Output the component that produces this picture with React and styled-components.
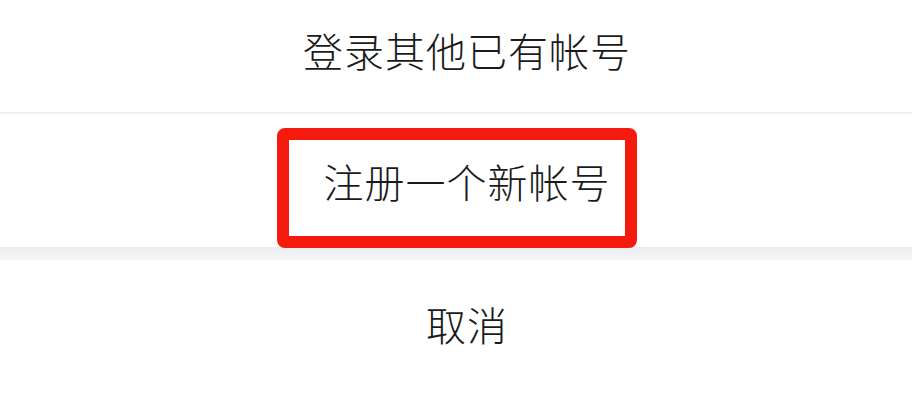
import React from "react";
import styled, { createGlobalStyle } from "styled-components";

const GlobalStyle = createGlobalStyle`
  html, body {
    margin: 0;
    padding: 0;
    background: #ffffff;
  }
  body {
    font-family: "Noto Sans CJK SC", "Noto Sans", sans-serif;
  }
`;

const Sheet = styled.div`
  width: 912px;
  height: 404px;
  overflow: hidden;
  display: flex;
  flex-direction: column;
  background: #ffffff;
`;

const Option = styled.div`
  position: relative;
  display: flex;
  align-items: center;
  justify-content: center;
  height: ${(p) => p.$height}px;
  padding-left: 22px;
  padding-bottom: ${(p) => p.$lift || 0}px;
  box-sizing: border-box;
  font-size: 40px;
  font-weight: 300;
  line-height: 1;
  letter-spacing: 1px;
  color: #1a1a1a;
`;

const Divider = styled.div`
  height: 2px;
  background: #f0f0f1;
`;

const Band = styled.div`
  height: 13px;
  background: linear-gradient(#ececee, #f6f6f7);
`;

// red annotation frame drawn over the middle option
const Highlight = styled.div`
  position: absolute;
  top: 14px;
  left: 50%;
  transform: translateX(calc(-50% + 1px));
  width: 360px;
  height: 120px;
  box-sizing: border-box;
  border: 12px solid #f41a0d;
  border-radius: 8px;
`;

const App = () => {
  return (
    <>
      <GlobalStyle />
      <Sheet>
        <Option $height={112} $lift={12}>登录其他已有帐号</Option>
        <Divider />
        <Option $height={133}>
          注册一个新帐号
          <Highlight />
        </Option>
        <Band />
        <Option $height={128}>取消</Option>
      </Sheet>
    </>
  );
};

export default App;
